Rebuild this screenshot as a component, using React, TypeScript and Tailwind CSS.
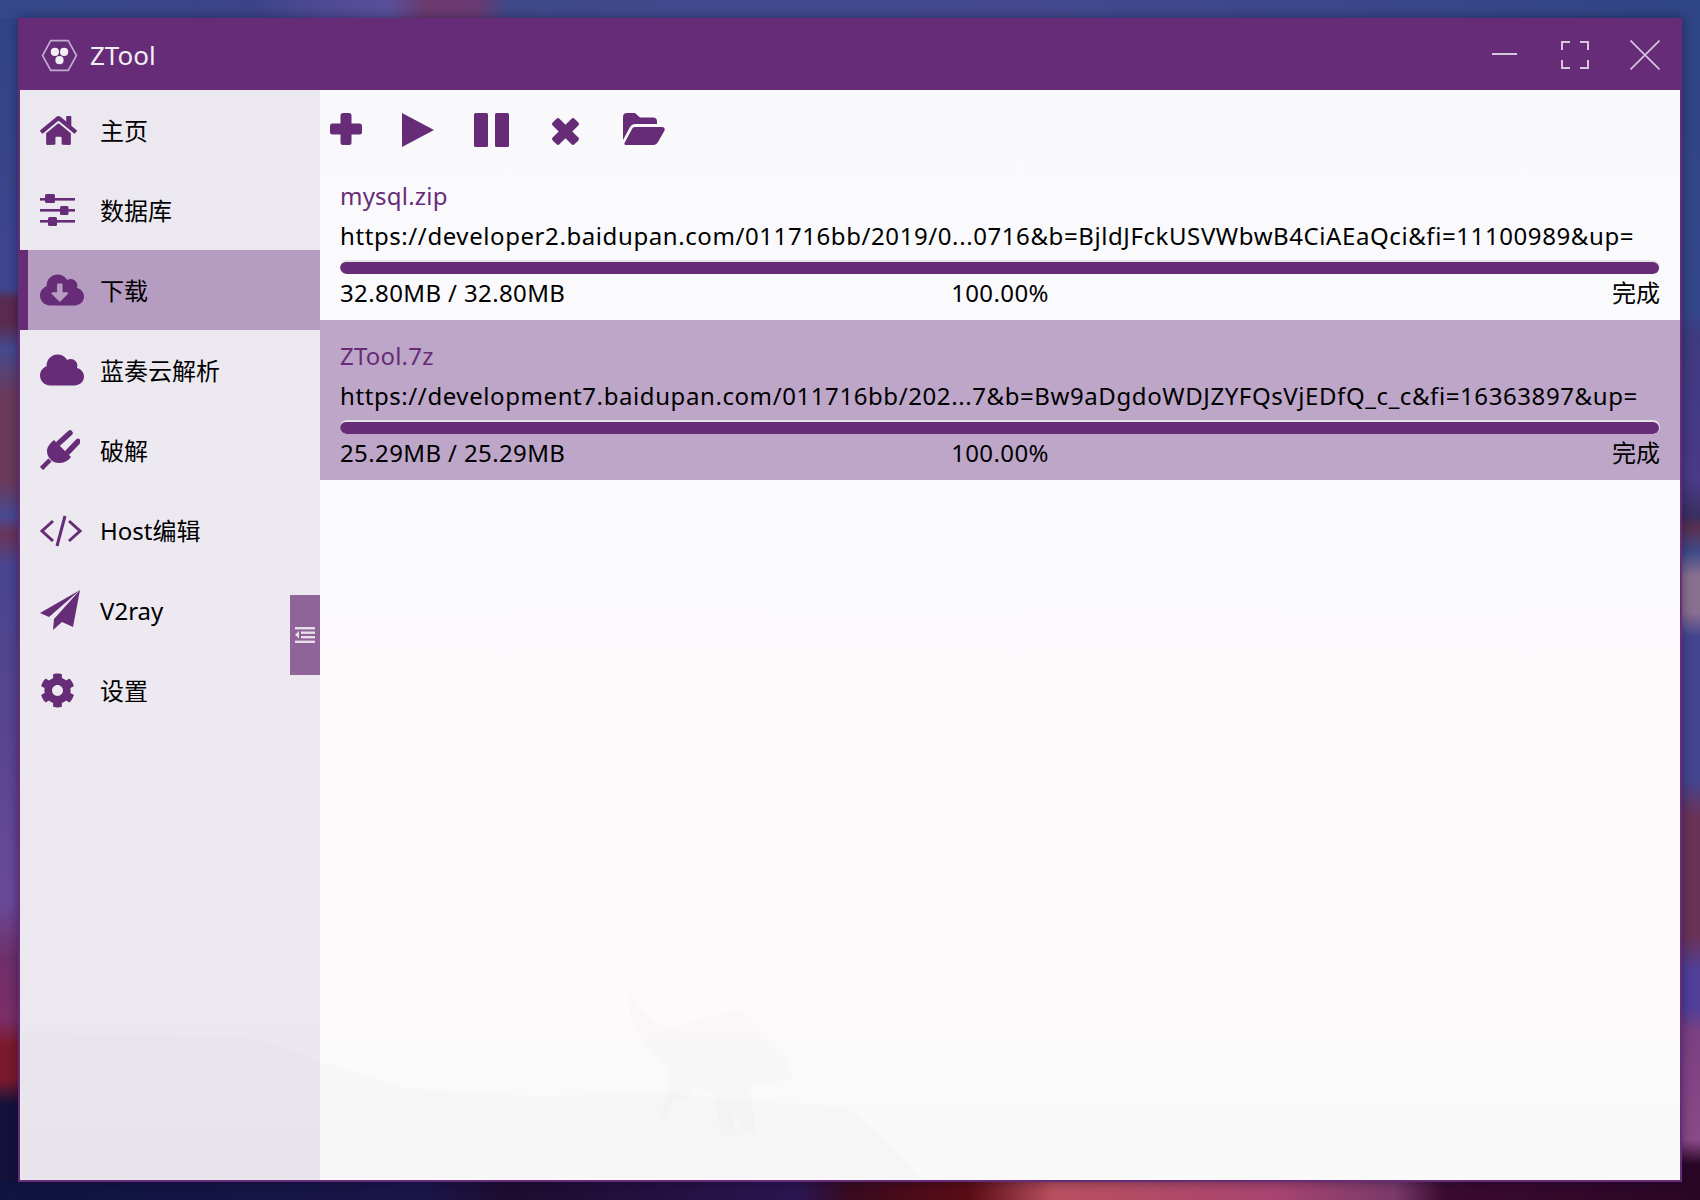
import React from 'react';
import { FaHome, FaCloudDownloadAlt, FaCloud, FaCog } from 'react-icons/fa';

const font = { fontFamily: '"Noto Sans", "Noto Sans CJK SC", sans-serif' };

type IconProps = { className?: string };

const SlidersIcon = ({ className }: IconProps) => (
  <svg viewBox="0 0 36 32" className={className} fill="currentColor">
    <rect x="0" y="4" width="35" height="2.6" />
    <rect x="5" y="0" width="10" height="9" rx="1.5" />
    <rect x="0" y="15" width="35" height="2.6" />
    <rect x="20" y="12" width="8.5" height="9" rx="1.5" />
    <rect x="0" y="26" width="35" height="2.6" />
    <rect x="8" y="23" width="9" height="9" rx="1.5" />
  </svg>
);

const PlugIcon = ({ className }: IconProps) => (
  <svg viewBox="0 0 40 40" className={className} fill="currentColor">
    <path d="M1.500 38.500 10 30" stroke="currentColor" strokeWidth="4.500" fill="none" />
    <path d="M14 10 31 27c-3 4-7 6-12 6-3 0-6-1-8-3-3-3-4-6-4-9 0-4 3-8 7-11Z" />
    <path d="M19 13 30 3M28 22 38 11.500" stroke="currentColor" strokeWidth="5.500" strokeLinecap="round" fill="none" />
  </svg>
);

const CodeIcon = ({ className }: IconProps) => (
  <svg viewBox="0 0 42 32" className={className} fill="none" stroke="currentColor" strokeWidth="3">
    <path d="M13 6 2 16l11 10" />
    <path d="m29 6 11 10-11 10" />
    <path d="M25 1 17 31" />
  </svg>
);

const PlaneIcon = ({ className }: IconProps) => (
  <svg viewBox="0 0 40 40" className={className} fill="currentColor">
    <path d="M40 0 0 23l9 4L40 0Z" />
    <path d="M40 0 14 29l-1 11 9-8 11 5L40 0Z" />
  </svg>
);

const LogoIcon = ({ className }: IconProps) => (
  <svg viewBox="0 0 36 32" className={className}>
    <path d="M9.500 1.500h17L34.500 16l-8 14.500h-17L1.500 16Z" fill="none" stroke="#c4acd0" strokeWidth="1.6" />
    <circle cx="13.500" cy="12.500" r="4" fill="#f3edf6" />
    <circle cx="22.500" cy="12.500" r="4" fill="#f3edf6" />
    <circle cx="18" cy="20.500" r="4" fill="#f3edf6" />
  </svg>
);

const OutdentIcon = ({ className }: IconProps) => (
  <svg viewBox="0 0 20 16" className={className} fill="currentColor">
    <rect x="0" y="0" width="20" height="2.400" />
    <rect x="6" y="4.500" width="14" height="2.400" />
    <rect x="6" y="9" width="14" height="2.400" />
    <rect x="0" y="13.600" width="20" height="2.400" />
    <path d="M4 4v7.500L0 7.750Z" />
  </svg>
);

const PlusIcon = ({ className }: IconProps) => (
  <svg viewBox="0 0 32 32" className={className} fill="currentColor">
    <rect x="10.500" y="0" width="11" height="32" rx="2.500" />
    <rect x="0" y="10.500" width="32" height="11" rx="2.500" />
  </svg>
);

const PlayIcon = ({ className }: IconProps) => (
  <svg viewBox="0 0 32 34" className={className} fill="currentColor">
    <path d="M0 0 32 17 0 34Z" />
  </svg>
);

const PauseIcon = ({ className }: IconProps) => (
  <svg viewBox="0 0 35 34" className={className} fill="currentColor">
    <rect x="0" y="0" width="14" height="34" rx="1.500" />
    <rect x="21" y="0" width="14" height="34" rx="1.500" />
  </svg>
);

const CrossIcon = ({ className }: IconProps) => (
  <svg viewBox="0 0 28 28" className={className} fill="currentColor">
    <rect x="9" y="-2" width="10" height="32" rx="2.500" transform="rotate(45 14 14)" />
    <rect x="9" y="-2" width="10" height="32" rx="2.500" transform="rotate(-45 14 14)" />
  </svg>
);

const FolderIcon = ({ className }: IconProps) => (
  <svg viewBox="0 0 42 32" className={className} fill="currentColor">
    <path d="M0 27V4a4 4 0 0 1 4-4h8l5 4.500h13a4 4 0 0 1 4 4V11H12a6 6 0 0 0-5 3L0 27Z" />
    <path d="M9 16a3 3 0 0 1 3-2h27a2.500 2.500 0 0 1 2.500 3.500L35 29a5 5 0 0 1-4 3H3a1.500 1.500 0 0 1-1.500-2L9 16Z" />
  </svg>
);

const navItems = [
  { label: '主页', icon: <FaHome className="w-[37px] h-[33px]" /> },
  { label: '数据库', icon: <SlidersIcon className="w-[36px] h-[32px]" /> },
  { label: '下载', icon: <FaCloudDownloadAlt className="w-[44px] h-[40px]" />, active: true },
  { label: '蓝奏云解析', icon: <FaCloud className="w-[44px] h-[40px]" /> },
  { label: '破解', icon: <PlugIcon className="w-[40px] h-[40px]" /> },
  { label: 'Host编辑', icon: <CodeIcon className="w-[42px] h-[32px] mt-[1px]" /> },
  { label: 'V2ray', icon: <PlaneIcon className="w-[40px] h-[40px]" /> },
  { label: '设置', icon: <FaCog className="w-[35px] h-[35px]" /> },
];

const downloads = [
  {
    name: 'mysql.zip',
    url: 'https://developer2.baidupan.com/011716bb/2019/0...0716&b=BjldJFckUSVWbwB4CiAEaQci&fi=11100989&up=',
    size: '32.80MB / 32.80MB',
  },
  {
    name: 'ZTool.7z',
    url: 'https://development7.baidupan.com/011716bb/202...7&b=Bw9aDgdoWDJZYFQsVjEDfQ_c_c&fi=16363897&up=',
    size: '25.29MB / 25.29MB',
    selected: true,
  },
];

export default function App() {
  return (
    <div
      className="relative w-[1700px] h-[1200px] p-[18px] overflow-hidden bg-[#2f4584] bg-[linear-gradient(90deg,#34498a_0%,#3c4488_15%,#4f4a94_19%,#5a4f98_23%,#6b3a6e_25%,#6a3a72_28%,#3f4a8a_30%,#44498f_60%,#2f4584_100%),linear-gradient(90deg,#0f1440_0%,#1a1548_25%,#1e0c30_30%,#2a1550_47%,#3a0a1f_50%,#5a0c14_57%,#b8505f_62%,#a84470_75%,#7a3a6a_82%,#3a0a30_85%,#2a0626_100%),linear-gradient(180deg,#2f4584_0%,#3f4590_24%,#5a2a50_25%,#5a2a50_27%,#454a90_29%,#6b3a5a_33%,#6b3a5a_40%,#4a4a92_43%,#6a3458_44.500%,#4a4590_47%,#57458f_60%,#6a4a98_75%,#6f2f6a_80%,#7c2d66_85%,#7a1a2e_87%,#7a1a2e_90%,#14123a_92%,#14123a_100%),linear-gradient(180deg,#2f4584_0%,#34468a_26%,#3f3a80_28%,#4a3a88_40%,#3a2f60_43%,#5a3050_44%,#3f4a8a_46%,#8a7090_48%,#8a7090_51%,#44458f_53%,#44458f_65%,#6a3258_68%,#6a3258_78%,#50409a_81%,#50409a_84%,#7c4080_86%,#8a4a88_95%,#2a0626_97%,#2a0626_100%)] bg-[length:100%_18px,100%_18px,18px_100%,18px_100%] bg-[position:0_0,0_100%,0_0,100%_0] bg-no-repeat"
      style={font}
    >
      <div className="relative flex flex-col h-full border-2 border-t-0 border-[#662c77] bg-[#fafafc] shadow-[0_0_10px_rgba(10,10,40,0.45)]">
        {/* Title bar */}
        <header className="flex items-center h-[72px] pt-[2px] -mx-[2px] bg-[#662c77] text-white shrink-0">
          <LogoIcon className="ml-[23px] w-[37px] h-[33px]" />
          <span className="ml-[12px] text-[26px] text-[#f3edf6]">ZTool</span>
          <div className="ml-auto flex items-center text-[#d8c8de]">
            <svg viewBox="0 0 25 4" className="w-[25px] h-[4px] mr-[44px] -mt-[2px]" fill="currentColor">
              <rect width="25" height="2" y="1" />
            </svg>
            <svg viewBox="0 0 28 28" className="w-[28px] h-[28px] mr-[41px]" fill="none" stroke="currentColor" strokeWidth="2">
              <path d="M1 9V1h8M19 1h8v8M27 19v8h-8M9 27H1v-8" />
            </svg>
            <svg viewBox="0 0 30 30" className="w-[30px] h-[30px] mr-[22px]" fill="none" stroke="currentColor" strokeWidth="1.600">
              <path d="M0.500 0.500l29 29M29.500 0.500l-29 29" />
            </svg>
          </div>
        </header>

        <div className="flex flex-1 min-h-0">
          {/* Sidebar */}
          <aside className="relative w-[300px] shrink-0 bg-[linear-gradient(180deg,#ebe8ef_0%,#eee9f1_60%,#ebe7ee_100%)]">
            {navItems.map((item) => (
              <div
                key={item.label}
                className={
                  item.active
                    ? 'flex items-center h-[80px] -ml-[2px] border-l-[10px] border-[#662c77] bg-[#b69cc1] text-black'
                    : 'flex items-center h-[80px] text-black'
                }
              >
                <span className={item.active ? 'flex w-[72px] pl-[12px] text-[#662c77]' : 'flex w-[80px] pl-[20px] text-[#662c77]'}>
                  {item.icon}
                </span>
                <span className="text-[24px] pt-[2px]">{item.label}</span>
              </div>
            ))}
            <button className="absolute right-0 top-[505px] flex items-center justify-center w-[30px] h-[80px] bg-[#8f6499] text-[#e8deec]">
              <OutdentIcon className="w-[20px] h-[16px]" />
            </button>
          </aside>

          {/* Content */}
          <main className="flex-1 min-w-0 bg-[linear-gradient(180deg,#f9f9fc_0%,#fcfafc_50%,#fdfafb_80%,#f9f9fa_100%)]">
            <div className="flex items-start h-[70px] pt-[23px] text-[#662c77]">
              <PlusIcon className="ml-[10px] w-[32px] h-[32px]" />
              <PlayIcon className="ml-[40px] w-[32px] h-[34px]" />
              <PauseIcon className="ml-[40px] w-[35px] h-[34px]" />
              <CrossIcon className="ml-[43px] mt-[5px] w-[27px] h-[27px]" />
              <FolderIcon className="ml-[44px] w-[42px] h-[32px]" />
            </div>
            {downloads.map((d) => (
              <div key={d.name} className={d.selected ? 'h-[160px] px-[20px] pt-[16px] bg-[#bda6c8]' : 'h-[160px] px-[20px] pt-[16px]'}>
                <div className="text-[24px] leading-[40px] tracking-[0.2px] text-[#662c77]">{d.name}</div>
                <div className="text-[24px] leading-[40px] tracking-[0.585px] text-black whitespace-nowrap">{d.url}</div>
                <div className="mt-[4px] h-[14px] rounded-full bg-[#e4e4e4] pt-[2px] pr-[1px] overflow-hidden">
                  <div className="h-[12px] rounded-full bg-[#662c77]" />
                </div>
                <div className="grid grid-cols-3 text-[24px] leading-[38px] text-black">
                  <span className="tracking-[0.38px]">{d.size}</span>
                  <span className="text-center tracking-[0.38px]">100.00%</span>
                  <span className="text-right">完成</span>
                </div>
              </div>
            ))}
          </main>
        </div>

        {/* Faint wallpaper showing through the window */}
        <svg viewBox="0 0 1660 1092" className="absolute left-0 top-[72px] w-[1660px] h-[1090px] pointer-events-none">
          <path
            d="M0 944 154 947 241 951 302 974 384 1000 522 1008 632 1003 729 1013 827 1018 862 1048 882 1068 900 1090H0Z"
            fill="#000000"
            fillOpacity="0.012"
          />
          <path
            d="M608 897c-4 30 10 60 40 84 2 20-2 35-12 50l10 2 8-24 14 4 6-14 20 6 6 42 16 2-4-30 10 24 14 4-6-50 44-6-12-30-40-40-44 10-30 10c-24-15-38-30-40-44Z"
            fill="#000000"
            fillOpacity="0.012"
          />
        </svg>
      </div>
    </div>
  );
}
